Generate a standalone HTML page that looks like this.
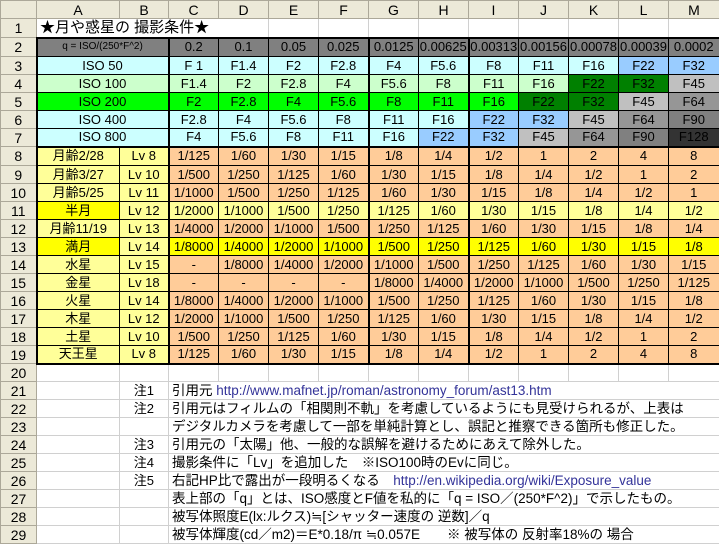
<!DOCTYPE html><html><head><meta charset="utf-8"><style>
*{margin:0;padding:0;box-sizing:border-box}
body{width:719px;height:545px;overflow:hidden;background:#fff;font-family:"Liberation Sans","Noto Sans CJK JP",sans-serif;font-size:13px;color:#000}
table{border-collapse:collapse;table-layout:fixed;width:719px}
td{height:18px;border:1px solid #000;text-align:center;white-space:nowrap;overflow:hidden;padding:0;line-height:16px}
tr.h td{background:#ece9d8;border:1px solid #aca899;font-size:14px}
td.rh{background:#ece9d8;border:1px solid #aca899;font-size:14px}
td.e{border:1px solid #d0d0d0}
.t2{border-top:2px solid #000}.l2{border-left:2px solid #000}.r2{border-right:2px solid #000}.b2{border-bottom:2px solid #000}
.hd{background:#808080}.cy{background:#ccffff}.lg{background:#ccffcc}.g{background:#00ff00}.dg{background:#008000}.bl{background:#99ccff}.sv{background:#c0c0c0}.g4{background:#969696}.g5{background:#808080}.dk{background:#333333}
.ly{background:#ffff99}.y{background:#ffff00}.o{background:#ffcc99}
td.n{text-align:left;border:1px solid #d0d0d0;overflow:visible;padding-left:3px;font-size:13.5px}
td.nb{text-align:right;padding-right:14px;border:1px solid #d0d0d0}
a{color:#333399;text-decoration:none}
tr.x td{height:19px}
</style></head><body>
<table>
<colgroup><col style="width:36px"><col style="width:83px"><col style="width:49px"><col style="width:50px"><col style="width:50px"><col style="width:50px"><col style="width:50px"><col style="width:50px"><col style="width:50px"><col style="width:50px"><col style="width:50px"><col style="width:50px"><col style="width:50px"><col style="width:51px"></colgroup>
<tr class="h"><td></td><td>A</td><td>B</td><td>C</td><td>D</td><td>E</td><td>F</td><td>G</td><td>H</td><td>I</td><td>J</td><td>K</td><td>L</td><td>M</td></tr>
<tr class="x"><td class="rh">1</td><td class="e" colspan="4" style="text-align:left;font-size:15px;padding-left:3px;overflow:visible;border-right:none">★月や惑星の 撮影条件★</td><td class="e"></td><td class="e"></td><td class="e"></td><td class="e"></td><td class="e"></td><td class="e"></td><td class="e"></td><td class="e"></td><td class="e"></td></tr>
<tr class="x"><td class="rh">2</td><td colspan="2" class="hd t2 l2" style="font-size:10px">q = ISO/(250*F^2)</td><td class="hd t2 l2">0.2</td><td class="hd t2">0.1</td><td class="hd t2">0.05</td><td class="hd t2">0.025</td><td class="hd t2 l2">0.0125</td><td class="hd t2">0.00625</td><td class="hd t2 l2">0.00313</td><td class="hd t2">0.00156</td><td class="hd t2">0.00078</td><td class="hd t2">0.00039</td><td class="hd t2 r2">0.0002</td></tr>
<tr><td class="rh">3</td><td colspan="2" class="cy l2">ISO 50</td><td class="cy l2">F 1</td><td class="cy">F1.4</td><td class="cy">F2</td><td class="cy">F2.8</td><td class="cy l2">F4</td><td class="cy">F5.6</td><td class="cy l2">F8</td><td class="cy">F11</td><td class="cy">F16</td><td class="bl">F22</td><td class="bl r2">F32</td></tr>
<tr><td class="rh">4</td><td colspan="2" class="lg l2">ISO 100</td><td class="lg l2">F1.4</td><td class="lg">F2</td><td class="lg">F2.8</td><td class="lg">F4</td><td class="lg l2">F5.6</td><td class="lg">F8</td><td class="lg l2">F11</td><td class="lg">F16</td><td class="dg">F22</td><td class="dg">F32</td><td class="sv r2">F45</td></tr>
<tr><td class="rh">5</td><td colspan="2" class="g l2">ISO 200</td><td class="g l2">F2</td><td class="g">F2.8</td><td class="g">F4</td><td class="g">F5.6</td><td class="g l2">F8</td><td class="g">F11</td><td class="g l2">F16</td><td class="dg">F22</td><td class="dg">F32</td><td class="sv">F45</td><td class="g4 r2">F64</td></tr>
<tr><td class="rh">6</td><td colspan="2" class="cy l2">ISO 400</td><td class="cy l2">F2.8</td><td class="cy">F4</td><td class="cy">F5.6</td><td class="cy">F8</td><td class="cy l2">F11</td><td class="cy">F16</td><td class="bl l2">F22</td><td class="bl">F32</td><td class="sv">F45</td><td class="g4">F64</td><td class="g5 r2">F90</td></tr>
<tr><td class="rh">7</td><td colspan="2" class="cy l2 b2">ISO 800</td><td class="cy l2 b2">F4</td><td class="cy b2">F5.6</td><td class="cy b2">F8</td><td class="cy b2">F11</td><td class="cy l2 b2">F16</td><td class="bl b2">F22</td><td class="bl l2 b2">F32</td><td class="sv b2">F45</td><td class="g4 b2">F64</td><td class="g5 b2">F90</td><td class="dk r2 b2">F128</td></tr>
<tr class="x"><td class="rh">8</td><td class="ly l2">月齢2/28</td><td class="ly">Lv 8</td><td class="o l2">1/125</td><td class="o">1/60</td><td class="o">1/30</td><td class="o">1/15</td><td class="o l2">1/8</td><td class="o">1/4</td><td class="o l2">1/2</td><td class="o">1</td><td class="o">2</td><td class="o">4</td><td class="o r2">8</td></tr>
<tr><td class="rh">9</td><td class="ly l2">月齢3/27</td><td class="ly">Lv 10</td><td class="o l2">1/500</td><td class="o">1/250</td><td class="o">1/125</td><td class="o">1/60</td><td class="o l2">1/30</td><td class="o">1/15</td><td class="o l2">1/8</td><td class="o">1/4</td><td class="o">1/2</td><td class="o">1</td><td class="o r2">2</td></tr>
<tr><td class="rh">10</td><td class="ly l2">月齢5/25</td><td class="ly">Lv 11</td><td class="o l2">1/1000</td><td class="o">1/500</td><td class="o">1/250</td><td class="o">1/125</td><td class="o l2">1/60</td><td class="o">1/30</td><td class="o l2">1/15</td><td class="o">1/8</td><td class="o">1/4</td><td class="o">1/2</td><td class="o r2">1</td></tr>
<tr><td class="rh">11</td><td class="y l2">半月</td><td class="ly">Lv 12</td><td class="ly l2">1/2000</td><td class="ly">1/1000</td><td class="ly">1/500</td><td class="ly">1/250</td><td class="ly l2">1/125</td><td class="ly">1/60</td><td class="ly l2">1/30</td><td class="ly">1/15</td><td class="ly">1/8</td><td class="ly">1/4</td><td class="ly r2">1/2</td></tr>
<tr><td class="rh">12</td><td class="ly l2">月齢11/19</td><td class="ly">Lv 13</td><td class="o l2">1/4000</td><td class="o">1/2000</td><td class="o">1/1000</td><td class="o">1/500</td><td class="o l2">1/250</td><td class="o">1/125</td><td class="o l2">1/60</td><td class="o">1/30</td><td class="o">1/15</td><td class="o">1/8</td><td class="o r2">1/4</td></tr>
<tr><td class="rh">13</td><td class="y l2">満月</td><td class="ly">Lv 14</td><td class="y l2">1/8000</td><td class="y">1/4000</td><td class="y">1/2000</td><td class="y">1/1000</td><td class="y l2">1/500</td><td class="y">1/250</td><td class="y l2">1/125</td><td class="y">1/60</td><td class="y">1/30</td><td class="y">1/15</td><td class="y r2">1/8</td></tr>
<tr><td class="rh">14</td><td class="ly l2">水星</td><td class="ly">Lv 15</td><td class="o l2">-</td><td class="o">1/8000</td><td class="o">1/4000</td><td class="o">1/2000</td><td class="o l2">1/1000</td><td class="o">1/500</td><td class="o l2">1/250</td><td class="o">1/125</td><td class="o">1/60</td><td class="o">1/30</td><td class="o r2">1/15</td></tr>
<tr><td class="rh">15</td><td class="ly l2">金星</td><td class="ly">Lv 18</td><td class="o l2">-</td><td class="o">-</td><td class="o">-</td><td class="o">-</td><td class="o l2">1/8000</td><td class="o">1/4000</td><td class="o l2">1/2000</td><td class="o">1/1000</td><td class="o">1/500</td><td class="o">1/250</td><td class="o r2">1/125</td></tr>
<tr><td class="rh">16</td><td class="ly l2">火星</td><td class="ly">Lv 14</td><td class="o l2">1/8000</td><td class="o">1/4000</td><td class="o">1/2000</td><td class="o">1/1000</td><td class="o l2">1/500</td><td class="o">1/250</td><td class="o l2">1/125</td><td class="o">1/60</td><td class="o">1/30</td><td class="o">1/15</td><td class="o r2">1/8</td></tr>
<tr><td class="rh">17</td><td class="ly l2">木星</td><td class="ly">Lv 12</td><td class="o l2">1/2000</td><td class="o">1/1000</td><td class="o">1/500</td><td class="o">1/250</td><td class="o l2">1/125</td><td class="o">1/60</td><td class="o l2">1/30</td><td class="o">1/15</td><td class="o">1/8</td><td class="o">1/4</td><td class="o r2">1/2</td></tr>
<tr><td class="rh">18</td><td class="ly l2">土星</td><td class="ly">Lv 10</td><td class="o l2">1/500</td><td class="o">1/250</td><td class="o">1/125</td><td class="o">1/60</td><td class="o l2">1/30</td><td class="o">1/15</td><td class="o l2">1/8</td><td class="o">1/4</td><td class="o">1/2</td><td class="o">1</td><td class="o r2">2</td></tr>
<tr><td class="rh">19</td><td class="ly l2 b2">天王星</td><td class="ly b2">Lv 8</td><td class="o l2 b2">1/125</td><td class="o b2">1/60</td><td class="o b2">1/30</td><td class="o b2">1/15</td><td class="o l2 b2">1/8</td><td class="o b2">1/4</td><td class="o l2 b2">1/2</td><td class="o b2">1</td><td class="o b2">2</td><td class="o b2">4</td><td class="o r2 b2">8</td></tr>
<tr><td class="rh">20</td><td class="e"></td><td class="e"></td><td class="e"></td><td class="e"></td><td class="e"></td><td class="e"></td><td class="e"></td><td class="e"></td><td class="e"></td><td class="e"></td><td class="e"></td><td class="e"></td><td class="e"></td></tr>
<tr><td class="rh">21</td><td class="e"></td><td class="e nb">注1</td><td class="n" colspan="11">引用元 <a>http://www.mafnet.jp/roman/astronomy_forum/ast13.htm</a></td></tr>
<tr><td class="rh">22</td><td class="e"></td><td class="e nb">注2</td><td class="n" colspan="11">引用元はフィルムの「相関則不軌」を考慮しているようにも見受けられるが、上表は</td></tr>
<tr><td class="rh">23</td><td class="e"></td><td class="e"></td><td class="n" colspan="11">デジタルカメラを考慮して一部を単純計算とし、誤記と推察できる箇所も修正した。</td></tr>
<tr><td class="rh">24</td><td class="e"></td><td class="e nb">注3</td><td class="n" colspan="11">引用元の「太陽」他、一般的な誤解を避けるためにあえて除外した。</td></tr>
<tr><td class="rh">25</td><td class="e"></td><td class="e nb">注4</td><td class="n" colspan="11">撮影条件に「Lv」を追加した　※ISO100時のEvに同じ。</td></tr>
<tr><td class="rh">26</td><td class="e"></td><td class="e nb">注5</td><td class="n" colspan="11">右記HP比で露出が一段明るくなる　<a>http://en.wikipedia.org/wiki/Exposure_value</a></td></tr>
<tr><td class="rh">27</td><td class="e"></td><td class="e"></td><td class="n" colspan="11">表上部の「q」とは、ISO感度とF値を私的に「q = ISO／(250*F^2)」で示したもの。</td></tr>
<tr><td class="rh">28</td><td class="e"></td><td class="e"></td><td class="n" colspan="11">被写体照度E(lx:ルクス)≒[シャッター速度の 逆数]／q</td></tr>
<tr><td class="rh">29</td><td class="e"></td><td class="e"></td><td class="n" colspan="11">被写体輝度(cd／m2)＝E*0.18/π ≒0.057E　　※ 被写体の 反射率18%の 場合</td></tr>
</table>
</body></html>
